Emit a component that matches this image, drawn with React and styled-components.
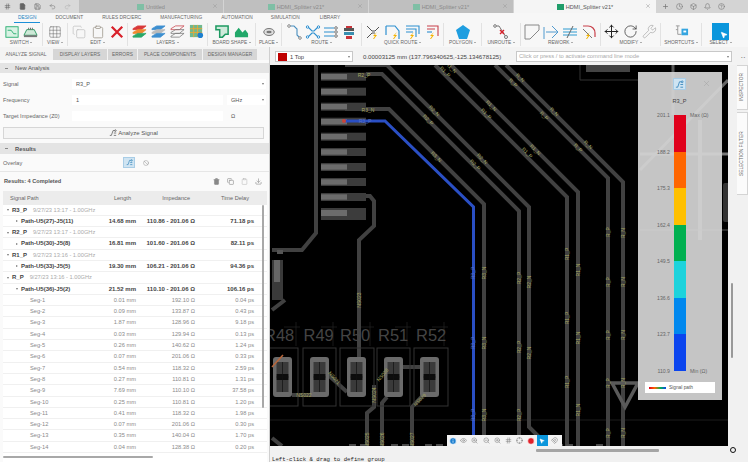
import React from "react";
import styled, { createGlobalStyle } from "styled-components";
import { Move, RotateCw, Wrench, Trash2, Download, Ban, X, Plus, Clock, Bell, HelpCircle, Grid3x3, Box, Save, Undo2, Redo2, File as FileIcon, Copy, Clipboard, Eye, ZoomIn, ZoomOut, Info, Hash, Crosshair, MousePointer2, Magnet } from "lucide-react";

const GlobalStyle = createGlobalStyle`
  html, body { margin: 0; padding: 0; background: #f1f1f1; }
  body { font-family: "Liberation Sans", Arial, sans-serif; color: #444; overflow: hidden; }
  * { box-sizing: border-box; }
`;

const Page = styled.div`
  width: 748px;
  height: 462px;
  display: flex;
  flex-direction: column;
  overflow: hidden;
`;

/* top window bar */
const TitleBar = styled.div`
  height: 13px;
  display: flex;
  background: #d4d4d4;
  flex: none;
`;
const AppTools = styled.div`
  width: 79px;
  display: flex;
  align-items: center;
  gap: 8px;
  padding-left: 4px;
  background: #d9d9d9;
  color: #666;
`;
const DocTab = styled.div`
  width: ${(p) => (p.$active ? 142 : 144)}px;
  margin-right: 1px;
  background: ${(p) => (p.$active ? "#f5f5f5" : "#bfbfbf")};
  color: ${(p) => (p.$active ? "#555" : "#8a8a8a")};
  display: flex;
  align-items: center;
  justify-content: center;
  gap: 2px;
  font-size: 5.6px;
  position: relative;
`;
const TabClose = styled.span`
  position: absolute;
  right: 5px;
  top: 3px;
  display: flex;
  color: #999;
`;
const DocSwatch = styled.span`
  width: 7px;
  height: 6px;
  background: ${(p) => (p.$active ? "#1f9d6a" : "#7fbfa5")};
`;
const WindowTools = styled.div`
  flex: 1;
  display: flex;
  align-items: center;
  gap: 7px;
  padding-left: 5px;
  color: #777;
`;

const RibbonTabs = styled.div`
  height: 9.5px;
  flex: none;
  display: flex;
  background: #f7f7f7;
  padding-left: 14px;
`;
const RibbonTab = styled.div`
  font-size: 4.8px;
  line-height: 9px;
  padding: 0 4px;
  margin-right: ${(p) => p.$gap}px;
  color: ${(p) => (p.$active ? "#1c7fbf" : "#666")};
  border-bottom: 1px solid ${(p) => (p.$active ? "#1c8fd8" : "transparent")};
  white-space: nowrap;
`;

const Ribbon = styled.div`
  height: 24.5px;
  flex: none;
  display: flex;
  background: #f7f7f7;
`;
const ToolGroup = styled.div`
  width: ${(p) => p.$w}px;
  flex: none;
  display: flex;
  flex-direction: column;
  align-items: center;
  border-right: ${(p) => (p.$last ? "none" : "1px solid #e2e2e2")};
  padding-right: ${(p) => (p.$last ? 9 : 0)}px;
  margin: 0.5px 0 1px;
`;
const ToolRow = styled.div`
  height: 18px;
  display: flex;
  align-items: center;
  gap: ${(p) => p.$gap ?? 3}px;
`;
const ToolLabel = styled.div`
  font-size: 4.8px;
  line-height: 6px;
  color: #666;
  white-space: nowrap;
  &::after {
    content: "";
    display: inline-block;
    margin-left: 1.5px;
    vertical-align: 1px;
    border-left: 1.3px solid transparent;
    border-right: 1.3px solid transparent;
    border-top: 1.6px solid #666;
  }
`;
const SelectTool = styled.div`
  width: 17px;
  height: 17px;
  background: #0a96dc;
  display: flex;
  align-items: flex-end;
  justify-content: flex-end;
  padding: 0 1px 1px 0;
  color: #fff;
`;

const Main = styled.div`
  flex: 1;
  display: flex;
  min-height: 0;
`;

/* left panel */
const LeftPanel = styled.div`
  width: 270px;
  flex: none;
  display: flex;
  flex-direction: column;
  background: #fafafa;
  border-right: 1px solid #cfcfcf;
  position: relative;
`;
const PanelTabs = styled.div`
  height: 13px;
  flex: none;
  display: flex;
  background: #f3f3f3;
  padding-top: 2px;
`;
const PanelTab = styled.div`
  width: ${(p) => p.$w}px;
  margin-right: 1px;
  background: ${(p) => (p.$active ? "#f3f3f3" : "#d6d6d6")};
  color: #666;
  font-size: 4.8px;
  line-height: 11px;
  letter-spacing: 0.05px;
  text-align: center;
  white-space: nowrap;
`;
const SectionHead = styled.div`
  height: ${(p) => p.$h}px;
  margin-top: ${(p) => p.$mt}px;
  flex: none;
  background: #e4e4e4;
  display: flex;
  align-items: center;
  font-size: 5.8px;
  font-weight: ${(p) => (p.$bold ? 700 : 400)};
  color: #555;
  padding-left: 5px;
  gap: 7px;
`;
const Dash = styled.span`
  width: 3px;
  height: 1px;
  background: #888;
`;
const FormArea = styled.div`
  flex: none;
  padding-top: 3px;
`;
const FormRow = styled.div`
  height: 16px;
  display: flex;
  align-items: center;
  padding-left: 3px;
  font-size: 5.6px;
  color: #666;
`;
const FieldLabel = styled.div`
  width: 69px;
  flex: none;
  white-space: nowrap;
`;
const Field = styled.div`
  width: ${(p) => p.$w}px;
  height: 10.5px;
  flex: none;
  background: ${(p) => (p.$plain ? "transparent" : "#fff")};
  padding: 0 4px;
  font-size: 5.6px;
  line-height: 10.5px;
  color: #555;
  position: relative;
  margin-right: 4px;
`;
const Caret = styled.span`
  position: absolute;
  right: 2px;
  top: 4px;
  width: 0;
  height: 0;
  border-left: 1.5px solid transparent;
  border-right: 1.5px solid transparent;
  border-top: 2px solid #777;
`;
const AnalyzeButton = styled.div`
  height: 11.5px;
  margin: 3px 5px 0 3px;
  border: 1px solid #d6d6d6;
  background: #f5f5f5;
  display: flex;
  align-items: center;
  justify-content: center;
  gap: 1px;
  font-size: 6px;
  color: #555;
  flex: none;
`;
const OverlayRow = styled.div`
  height: 18px;
  flex: none;
  display: flex;
  align-items: center;
  padding-left: 3px;
  font-size: 5.6px;
  color: #666;
  border-bottom: 1px solid #e6e6e6;
`;
const OverlayButtons = styled.div`
  margin-left: 101px;
  display: flex;
  align-items: center;
  gap: 8px;
  color: #999;
`;
const ToggleIcon = styled.span`
  width: 12px;
  height: 11px;
  background: #cfe4f2;
  border: 1px solid #a9cde6;
  display: flex;
  align-items: center;
  justify-content: center;
`;
const ResultsBar = styled.div`
  height: 18.5px;
  flex: none;
  display: flex;
  align-items: center;
  padding: 0 7px 0 4px;
  justify-content: space-between;
  font-size: 5.6px;
  font-weight: 700;
  color: #555;
`;
const ResultTools = styled.div`
  display: flex;
  gap: 7px;
  color: #888;
`;
const TableWrap = styled.div`
  flex: 1;
  margin: 0 2px 0 3px;
  position: relative;
  overflow: hidden;
  background: #fff;
`;
const Cols = "78px 57px 59px 59px";
const TableHead = styled.div`
  display: grid;
  grid-template-columns: ${Cols};
  height: 14px;
  align-items: center;
  background: #ececec;
  font-size: 5.6px;
  color: #666;
  text-align: right;
  & > div { padding-right: 7px; }
  & > div:first-child { text-align: left; padding-left: 7px; }
`;
const TableRow = styled.div`
  display: grid;
  grid-template-columns: ${Cols};
  height: 11.3px;
  align-items: center;
  font-size: ${(p) => (p.$bold ? 6 : 5.7)}px;
  line-height: 11px;
  font-weight: ${(p) => (p.$bold ? 700 : 400)};
  color: ${(p) => (p.$bold ? "#444" : "#8a8a8a")};
  border-bottom: 1px solid #f0f0f0;
  white-space: nowrap;
`;
const NameCell = styled.div`
  padding-left: ${(p) => p.$indent}px;
  grid-column: ${(p) => (p.$wide ? "1 / -1" : "auto")};
  display: flex;
  align-items: center;
  gap: 3px;
`;
const NumCell = styled.div`
  text-align: right;
  padding-right: 2px;
`;
const GroupDate = styled.span`
  font-weight: 400;
  font-size: 5.7px;
  color: #aaa;
  margin-left: 3px;
`;
const Arrow = styled.span`
  width: 0;
  height: 0;
  flex: none;
  ${(p) =>
    p.$open
      ? "border-left: 1.5px solid transparent; border-right: 1.5px solid transparent; border-top: 2px solid #777;"
      : "border-top: 1.5px solid transparent; border-bottom: 1.5px solid transparent; border-left: 2px solid #777;"}
`;
const VScroll = styled.div`
  position: absolute;
  left: 259px;
  top: 14px;
  width: 2px;
  height: 203px;
  background: #a8a8a8;
  border-radius: 1px;
`;
const HScroll = styled.div`
  position: absolute;
  left: 0;
  bottom: 4px;
  width: 150px;
  height: 2px;
  background: #a8a8a8;
  border-radius: 1px;
`;

/* right work area */
const WorkArea = styled.div`
  flex: 1;
  display: flex;
  flex-direction: column;
  min-width: 0;
`;
const LayerBar = styled.div`
  height: 18px;
  flex: none;
  display: flex;
  align-items: center;
  background: #f3f3f3;
  padding: 1px 0 0 5px;
  font-size: 5.8px;
  color: #444;
`;
const LayerSelect = styled.div`
  width: 78px;
  height: 11px;
  background: #fff;
  border: 1px solid #c8c8c8;
  display: flex;
  align-items: center;
  gap: 3px;
  padding-left: 2px;
  position: relative;
`;
const Swatch = styled.span`
  width: 9px;
  height: 8px;
  background: #bf0000;
`;
const Coords = styled.div`
  width: 163px;
  padding-left: 10px;
  font-size: 6.1px;
  white-space: nowrap;
`;
const CommandInput = styled.div`
  width: 216px;
  height: 11px;
  background: #fff;
  border: 1px solid #c8c8c8;
  color: #aaa;
  font-size: 5.8px;
  line-height: 9px;
  padding-left: 2px;
  position: relative;
`;
const MoreDots = styled.div`
  margin-left: 9px;
  font-size: 6px;
  font-weight: 700;
  color: #666;
  letter-spacing: 0.5px;
`;
const CanvasRow = styled.div`
  flex: 1;
  display: flex;
  min-height: 0;
`;
const Canvas = styled.div`
  width: 458px;
  height: 381px;
  background: #000;
  position: relative;
  overflow: hidden;
  flex: none;
`;
const SideStrip = styled.div`
  flex: 1;
  position: relative;
  background: #f1f1f1;
`;
const SideTab = styled.div`
  position: absolute;
  right: 0;
  top: ${(p) => p.$top}px;
  width: 11px;
  height: ${(p) => p.$h}px;
  background: #fbfbfb;
  border: 1px solid #d4d4d4;
  border-right: none;
  writing-mode: vertical-rl;
  transform: rotate(180deg);
  font-size: 4.8px;
  line-height: 9px;
  text-align: center;
  color: #666;
  white-space: nowrap;
`;
const SideScroll = styled.div`
  position: absolute;
  left: 3px;
  top: 218px;
  width: 2px;
  height: 75px;
  background: #999;
  border-radius: 1px;
`;
const StatusBar = styled.div`
  height: 16px;
  flex: none;
  position: relative;
  background: #f1f1f1;
  font-family: "Liberation Mono", monospace;
  font-size: 5.7px;
  color: #222;
  padding: 10.5px 0 0 2px;
  line-height: 6px;
  white-space: nowrap;
`;
const CanvasHScroll = styled.div`
  position: absolute;
  left: 266px;
  top: 3px;
  width: 123px;
  height: 2.5px;
  background: #a5a5a5;
  border-radius: 1px;
`;
const CornerDot = styled.div`
  position: absolute;
  left: 460px;
  top: 1px;
  width: 6px;
  height: 6px;
  border-radius: 50%;
  border: 1.5px solid #111;
`;

/* overlays on the canvas */
const Legend = styled.div`
  position: absolute;
  left: 368px;
  top: 7px;
  width: 84px;
  height: 328px;
  background: rgba(212, 212, 212, 0.93);
`;
const LegendClose = styled.span`
  position: absolute;
  left: 64px;
  top: 7px;
  display: flex;
  color: #9a9a9a;
`;
const LegendToggle = styled(ToggleIcon)`
  position: absolute;
  left: 35px;
  top: 6px;
  width: 13px;
  height: 12px;
`;
const LegendName = styled.div`
  position: absolute;
  left: 0;
  width: 83px;
  top: 25.5px;
  text-align: center;
  font-size: 5.6px;
  line-height: 7px;
  color: #444;
`;
const ScaleBar = styled.div`
  position: absolute;
  left: 36px;
  top: 43px;
  width: 12px;
  display: flex;
  flex-direction: column;
`;
const ScaleBand = styled.div`
  height: ${(p) => p.$h}px;
  background: ${(p) => p.$c};
`;
const ScaleLabels = styled.div`
  position: absolute;
  left: 0;
  top: 40px;
  width: 32px;
  height: 262px;
  display: flex;
  flex-direction: column;
  justify-content: space-between;
  text-align: right;
  font-size: 5.2px;
  line-height: 6px;
  color: #666;
`;
const ScaleEnd = styled.div`
  position: absolute;
  left: 52px;
  top: ${(p) => p.$top}px;
  font-size: 5.2px;
  line-height: 6px;
  color: #666;
  white-space: nowrap;
`;
const LegendKey = styled.div`
  position: absolute;
  left: 7px;
  top: 310px;
  width: 70px;
  height: 11px;
  background: #fff;
  display: flex;
  align-items: center;
  gap: 3px;
  padding-left: 4px;
  font-size: 4.8px;
  color: #555;
`;
const KeyLine = styled.span`
  width: 17px;
  height: 2px;
  background: linear-gradient(90deg, #e0001b, #ff6600, #00b050, #0a44ee);
`;
const CanvasToolbar = styled.div`
  position: absolute;
  left: 177px;
  top: 370px;
  height: 11px;
  display: flex;
  background: #f3f3f3;
  color: #888;
`;
const CanvasBtn = styled.span`
  width: ${(p) => p.$w ?? 11.2}px;
  height: 11px;
  display: flex;
  align-items: center;
  justify-content: center;
  background: ${(p) => (p.$on ? "#0a96dc" : "transparent")};
  color: ${(p) => p.$c ?? (p.$on ? "#fff" : "#888")};
`;
const HandleTab = styled.div`
  position: absolute;
  left: 453px;
  top: 118px;
  width: 5px;
  height: 39px;
  background: #333;
  border-radius: 2px 0 0 2px;
`;

const Sv = ({ children, s = 16 }) => (
  <svg width={s} height={s} viewBox="0 0 16 16" fill="none">
    {children}
  </svg>
);
const Bolt = () => <path d="M9 15l3-4H10l2-3-4 4h2l-2 3z" fill="#f5b400" />;
const Stack = ({ a, b, c, fill = true }) => (
  <>
    {[[a, 3], [b, 7], [c, 11]].map(([col, y]) => (
      <path key={y} d={`M1 ${y + 2}L6 ${y - 1}h9l-5 4H1z`} fill={fill ? col : "none"} stroke={col} strokeWidth="0.8" />
    ))}
  </>
);

const Icons = {
  switch2d: (
    <Sv s={14}>
      <rect x="1" y="2" width="14" height="12" fill="#d8f2e4" stroke="#1faa6a" />
      <path d="M3 6h4l3 4h3" stroke="#1faa6a" />
    </Sv>
  ),
  switch3d: (
    <Sv s={15}>
      <path d="M1 12L4 6h8l3 6z" fill="#cfe9d8" stroke="#2f9a63" />
      <rect x="1" y="12" width="14" height="2" fill="#777" />
      <path d="M6 6v-2M8 6v-2M10 6v-2" stroke="#666" />
    </Sv>
  ),
  grid: <Grid3x3 size={14} strokeWidth={0.8} color="#555" />,
  copy: <Copy size={14} strokeWidth={0.9} color="#aaa" />,
  paste: <Clipboard size={14} strokeWidth={1.4} color="#a09a90" />,
  del: (
    <Sv s={14}>
      <path d="M2 2l12 12M14 2L2 14" stroke="#d8202a" strokeWidth="2.6" />
    </Sv>
  ),
  layers1: <Sv s={15}><Stack a="#d8393a" b="#f08a30" c="#2aa868" /></Sv>,
  layers2: <Sv s={15}><Stack a="#3d8fd0" b="#bbb" c="#3d8fd0" /></Sv>,
  layers3: <Sv s={15}><Stack a="#c8404a" b="#777" c="#777" fill={false} /></Sv>,
  layers4: (
    <Sv s={15}>
      <rect x="1" y="1" width="13" height="13" fill="#6fb98f" />
      <path d="M1 5h13M1 9h13M5 1v13M9 1v13" stroke="#e8a838" />
      <circle cx="12" cy="12" r="3" fill="#1c7fd0" />
    </Sv>
  ),
  board1: (
    <Sv s={15}>
      <path d="M1 2h13v9h-3l-3 3H5v-8H1z" fill="#cfeadb" stroke="#1e9a62" strokeWidth="1.6" />
    </Sv>
  ),
  board2: (
    <Sv s={15}>
      <path d="M1 14V9l4-5 4 5 3-3 3 4v4z" fill="#22a86a" />
    </Sv>
  ),
  place: (
    <Sv s={14}>
      <ellipse cx="8" cy="8" rx="6" ry="4" fill="#ddd" stroke="#666" />
      <ellipse cx="8" cy="8" rx="3" ry="1.5" fill="#777" />
    </Sv>
  ),
  route1: (
    <Sv>
      <path d="M2 2h5l3 3v6l3 3" stroke="#4a8fc0" strokeWidth="1.1" />
      <circle cx="2" cy="2" r="1.3" stroke="#888" fill="#fff" />
      <circle cx="13" cy="14" r="1.3" stroke="#888" fill="#fff" />
    </Sv>
  ),
  route2: (
    <Sv>
      <path d="M3 3l4 4h2l4-4M3 13l4-4h2l4 4" stroke="#2d8fd0" strokeWidth="1.1" />
      <circle cx="2.5" cy="3" r="1.2" stroke="#2d8fd0" fill="#fff" />
      <circle cx="2.5" cy="13" r="1.2" stroke="#2d8fd0" fill="#fff" />
      <circle cx="13.5" cy="3" r="1.2" stroke="#2d8fd0" fill="#fff" />
      <circle cx="13.5" cy="13" r="1.2" stroke="#2d8fd0" fill="#fff" />
    </Sv>
  ),
  route3: (
    <Sv>
      <path d="M1 4h10M1 8h10M1 12h10" stroke="#2d8fd0" strokeWidth="1.2" />
      <circle cx="13" cy="4" r="1.3" stroke="#777" />
      <circle cx="13" cy="8" r="1.3" stroke="#777" />
      <circle cx="13" cy="12" r="1.3" stroke="#777" />
    </Sv>
  ),
  route4: (
    <Sv>
      <rect x="3" y="4" width="10" height="3" fill="#555" />
      <rect x="3" y="8" width="10" height="3" fill="#3a8fb0" />
      <path d="M5 2h6v2H5zM5 12h6v3H5z" fill="#c8343a" />
    </Sv>
  ),
  quick0: (
    <Sv>
      <path d="M2 2l5 5h3l4-4M2 14l5-5h3" stroke="#555" />
      <Bolt />
    </Sv>
  ),
  quick1: (
    <Sv>
      <path d="M1 2h9l4 5v8" stroke="#2d8fd0" strokeWidth="1.2" />
      <path d="M1 2v9" stroke="#2d8fd0" strokeWidth="1.2" />
      <Bolt />
    </Sv>
  ),
  quick2: (
    <Sv>
      <path d="M1 2h13v8M1 5h10v8M1 8h7" stroke="#2d8fd0" strokeWidth="1.1" />
      <path d="M6 15l3-4H7l2-3-4 4h2l-2 3z" fill="#f5b400" />
    </Sv>
  ),
  quick3: (
    <Sv>
      <path d="M2 2h11v10M2 5h8" stroke="#c8404a" strokeWidth="1.1" />
      <path d="M2 8h5" stroke="#2d8fd0" strokeWidth="1.1" />
      <path d="M6 15l3-4H7l2-3-4 4h2l-2 3z" fill="#f5b400" />
    </Sv>
  ),
  polygon: (
    <Sv>
      <path d="M8 1l7 5-3 9H4L1 6z" fill="#1f9ee0" />
    </Sv>
  ),
  unroute: (
    <Sv s={16}>
      <path d="M2 2h4l7 11" stroke="#777" />
      <circle cx="2" cy="2" r="1.3" stroke="#777" fill="#fff" />
      <circle cx="13" cy="13" r="1.5" stroke="#777" fill="#fff" />
      <path d="M7 6l4 4M11 6l-4 4" stroke="#d8202a" strokeWidth="1.4" />
    </Sv>
  ),
  rework1: (
    <Sv>
      <path d="M1 1h14v5l-9 9H1z" stroke="#888" />
    </Sv>
  ),
  rework2: (
    <Sv>
      <path d="M1 3v12M3 8h11M9 2l6 6-6 6" stroke="#3d8fc8" strokeWidth="0.9" />
    </Sv>
  ),
  rework3: (
    <Sv>
      <path d="M1 5h14M1 8h14M1 11h14" stroke="#2d9ad0" />
      <path d="M5 14l6-12" stroke="#666" />
    </Sv>
  ),
  rework4: (
    <Sv>
      <path d="M2 2h5c4 0 7 3 7 7v4" stroke="#c8404a" strokeWidth="1.2" />
      <path d="M2 5l9 9" stroke="#777" />
      <path d="M6 15l3-4H7l2-3-4 4h2l-2 3z" fill="#f5b400" />
    </Sv>
  ),
  move: <Move size={15} strokeWidth={1.6} color="#222" />,
  rotate: <RotateCw size={15} strokeWidth={1.2} color="#333" />,
  wrench: <Wrench size={15} strokeWidth={0.8} color="#888" />,
  shortcuts: (
    <Sv s={15}>
      <path d="M2 2h4M4 2v9h4M2 6h2" stroke="#999" />
      <rect x="8" y="5" width="7" height="7" fill="#35a5e0" />
      <rect x="10" y="7" width="3" height="2" fill="#fff" />
    </Sv>
  ),
};

const Signal = ({ s = 8, c = "#2d7fb8" }) => (
  <svg width={s} height={s} viewBox="0 0 10 10" fill="none" stroke={c} strokeWidth="0.9">
    <path d="M1 8h2l2-6h2M6 5h3M6 8h3" />
    <circle cx="8" cy="2" r="1" />
  </svg>
);

const toolGroups = [
  { label: "SWITCH", w: 43, gap: 4, icons: ["switch2d", "switch3d"] },
  { label: "VIEW", w: 25, icons: ["grid"] },
  { label: "EDIT", w: 60, gap: 5, icons: ["copy", "paste", "del"] },
  { label: "LAYERS", w: 80, gap: 4, icons: ["layers1", "layers2", "layers3", "layers4"] },
  { label: "BOARD SHAPE", w: 48, gap: 4, icons: ["board1", "board2"] },
  { label: "PLACE", w: 26, icons: ["place"] },
  { label: "ROUTE", w: 80, gap: 2, icons: ["route1", "route2", "route3", "route4"] },
  { label: "QUICK ROUTE", w: 82, gap: 4, icons: ["quick0", "quick1", "quick2", "quick3"] },
  { label: "POLYGON", w: 38, icons: ["polygon"] },
  { label: "UNROUTE", w: 39, icons: ["unroute"] },
  { label: "REWORK", w: 80, gap: 3, icons: ["rework1", "rework2", "rework3", "rework4"] },
  { label: "MODIFY", w: 60, gap: 4, icons: ["move", "rotate", "wrench"] },
  { label: "SHORTCUTS", w: 41, icons: ["shortcuts"] },
];

const ribbonTabs = [
  ["DESIGN", 11, true], ["DOCUMENT", 11], ["RULES DRC/ERC", 11], ["MANUFACTURING", 11],
  ["AUTOMATION", 10], ["SIMULATION", 12], ["LIBRARY", 0],
];

const groups = [
  { name: "R3_P", date: "9/27/23 13:17 - 1.00GHz", path: "Path-U5(27)-J5(11)", vals: ["14.68 mm", "110.86 - 201.06 Ω", "71.18 ps"] },
  { name: "R2_P", date: "9/27/23 13:17 - 1.00GHz", path: "Path-U5(30)-J5(8)", vals: ["16.81 mm", "101.60 - 201.06 Ω", "82.11 ps"] },
  { name: "R1_P", date: "9/27/23 13:16 - 1.00GHz", path: "Path-U5(33)-J5(5)", vals: ["19.30 mm", "106.21 - 201.06 Ω", "94.36 ps"] },
  { name: "R_P", date: "9/27/23 13:16 - 1.00GHz", path: "Path-U5(36)-J5(2)", vals: ["21.52 mm", "110.10 - 201.06 Ω", "106.16 ps"], open: true },
];
const segs = [
  ["0.01", "192.10", "0.04"], ["0.09", "133.87", "0.43"], ["1.87", "128.96", "9.18"], ["0.03", "129.94", "0.13"],
  ["0.26", "140.62", "1.24"], ["0.07", "201.06", "0.33"], ["0.54", "118.32", "2.59"], ["0.27", "110.81", "1.31"],
  ["7.69", "110.10", "37.58"], ["0.25", "110.81", "1.20"], ["0.41", "118.32", "1.98"], ["0.07", "201.06", "0.30"],
  ["0.35", "140.04", "1.70"], ["0.04", "128.38", "0.20"],
];

const bands = [
  ["#e0001b", 37], ["#ff6600", 36], ["#ffc000", 37], ["#00b050", 36],
  ["#1dd3dc", 37], ["#0088ee", 36], ["#0a44ee", 37],
];
const scale = ["201.1", "188.2", "175.3", "162.4", "149.5", "136.6", "123.7", "110.9"];

const TRACE = "#414141";
const traces = [
  "M345 109H389L484 204V446",
  "M366 74H382L519 211V446",
  "M345 65H387L529 207V427L545 443",
  "M435 65L567 197V446",
  "M451 65L578 192V446",
  "M495 65L608 178V446",
  "M506 65L623 182V446",
  "M366 196H370L374 201V226L359 240V357",
  "M316 65V233L302 250H272",
  "M374 385V407L367 413V446",
  "M387 397L382 403V446",
  "M425 393L412 407V446",
  "M325 372L347 392",
  "M292 395H315",
  "M402 367H422",
  "M272 438L282 446",
  "M272 310L285 300",
];
const pads = [76.7, 91.7, 106.7, 121.7, 136.7, 152, 167, 182, 197, 213];
const resistors = [273, 310, 347, 384, 420];
const boxes = [[262, 36], [303, 33], [340, 34], [377, 33], [414, 34]];
const refs = [["R48", 264], ["R49", 303.5], ["R50", 340], ["R51", 378], ["R52", 416]];
const crossMarks = [296, 333, 370, 407, 444];
const bottomPads = [349, 360, 391, 402, 425, 436, 556, 566, 596];
const diagLabels = [
  ["R2_N", 433, 112], ["R2_P", 427, 121], ["R3_N", 435, 158], ["R2_N", 481, 160], ["R2_P", 474, 166],
  ["R1_N", 490, 107], ["R1_P", 485, 115], ["R1_P", 444, 73], ["R1_N", 450, 69], ["R_N", 519, 79], ["R_P", 512, 84],
  ["R_N", 553, 113], ["R_P", 543, 117], ["R_N", 587, 146], ["R_P", 577, 149], ["R1_N", 534, 151], ["R1_P", 526, 154],
];
const vertLabels = [
  ["R2_P", 519, 278], ["R2_P", 519, 347], ["R2_P", 519, 415], ["R2_N", 529, 282], ["R2_N", 529, 353],
  ["R1_P", 567, 254], ["R1_P", 567, 318], ["R1_P", 567, 382], ["R1_N", 578, 270], ["R1_N", 578, 338], ["R1_N", 578, 410],
  ["R_P", 608, 232], ["R_P", 608, 282], ["R_P", 608, 335], ["R_P", 608, 383], ["R_P", 608, 433],
  ["R_N", 623, 233], ["R_N", 623, 282], ["R_N", 623, 335], ["R_N", 623, 383], ["R_N", 623, 433],
  ["R3_N", 484, 273], ["R3_N", 484, 343], ["R3_N", 484, 415], ["R3_P", 473, 273], ["R3_P", 473, 343], ["R3_P", 473, 415],
  ["NS023", 359, 300], ["NS024", 374, 395], ["NS025", 367, 440], ["NS026", 382, 440], ["NS027", 412, 440],
];

const BoardDrawing = () => (
  <svg width="458" height="381" viewBox="270 65 458 381" style={{ display: "block" }}>
    <rect x="270" y="65" width="458" height="381" fill="#000" />
    <path d="M270 420H728" stroke="#2a2a2a" strokeWidth="0.7" />
    <path d="M580 65V80H638" stroke="#333" fill="none" />
    <rect x="586" y="65" width="44" height="7" fill="#444" />
    <path d="M673 65V115" stroke="#555" strokeWidth="3" />
    <path d="M728 80L640 170" stroke="#666" strokeWidth="3" />
    <path d="M640 154H728" stroke="#777" strokeWidth="3" />
    <path d="M700 120V240" stroke="#777" strokeWidth="4" />
    <path d="M640 230H728" stroke="#555" strokeWidth="1" />
    {crossMarks.map((x) => (
      <path key={x} d={`M${x - 12} 327H${x + 4}M${x} 322V346`} stroke="#2a2a2a" strokeWidth="0.6" />
    ))}
    {traces.map((d) => (
      <path key={d} d={d} stroke={TRACE} strokeWidth="4" fill="none" />
    ))}
    {bottomPads.map((x) => (
      <rect key={x} x={x} y="444" width="7" height="2" fill="#4a4a4a" />
    ))}
    <rect x="272" y="260" width="11" height="40" fill="#3a3a3a" />
    <rect x="274" y="260" width="6" height="22" fill="#666" />
    <rect x="277" y="250" width="6" height="4" fill="#555" />
    {pads.map((y) => (
      <g key={y}>
        <rect x="321" y={y - 4} width="45" height="8" fill="#3c3c3c" />
        <rect x="321" y={y - 2.7} width="26" height="5.4" fill="#6c6c6c" />
      </g>
    ))}
    <rect x="321" y="208" width="45" height="12" fill="#3c3c3c" />
    <rect x="321" y="210" width="26" height="6" fill="#6c6c6c" />
    {boxes.map(([x, w]) => (
      <rect key={x} x={x} y="348" width={w} height="58" stroke="#333" fill="none" />
    ))}
    {resistors.map((x) => (
      <g key={x}>
        <rect x={x} y="357" width="19" height="40" rx="3" fill="#6a6a6a" />
        <rect x={x + 3.5} y="362" width="12" height="12" fill="#3a3a3a" />
        <rect x={x + 3.5} y="380" width="12" height="12" fill="#3a3a3a" />
        <rect x={x + 3.5} y="374" width="12" height="6" fill="#0c0c0c" />
        <path d={`M${x + 9.5} 362V392M${x + 3.5} 377H${x + 15.5}`} stroke="#111" strokeWidth="0.7" />
      </g>
    ))}
    {refs.map(([t, x]) => (
      <text key={t} x={x} y="341" fontFamily="Liberation Sans" fontSize="16.5" fill="#444">
        {t}
      </text>
    ))}
    <path d="M612 383H638L625 407Z" stroke="#5a5a5a" strokeWidth="3.5" fill="none" />
    <path d="M344 121H385L473.5 207V446" stroke="#2a4fc4" strokeWidth="3" fill="none" />
    <circle cx="344" cy="121" r="2" fill="#c8453a" />
    <path d="M272 367L283 355" stroke="#b8663a" strokeWidth="1.5" />
    {diagLabels.map(([t, x, y], i) => (
      <text key={i} x={x} y={y} fontFamily="Liberation Sans" fontSize="5" fill="#a8a860" textAnchor="middle" transform={`rotate(45 ${x} ${y})`}>
        {t}
      </text>
    ))}
    {vertLabels.map(([t, x, y], i) => (
      <text key={i} x={x + 1.8} y={y} fontFamily="Liberation Sans" fontSize="5" fill={x === 473 ? "#5a75c8" : "#a8a860"} textAnchor="middle" transform={`rotate(-90 ${x + 1.8} ${y})`}>
        {t}
      </text>
    ))}
    <text x="364" y="77" fontFamily="Liberation Sans" fontSize="5" fill="#a8a860" textAnchor="middle">R2_P</text>
    <text x="368" y="112" fontFamily="Liberation Sans" fontSize="5" fill="#a8a860" textAnchor="middle">R3_N</text>
    <text x="365" y="123" fontFamily="Liberation Sans" fontSize="5" fill="#5a75c8" textAnchor="middle">R3_P</text>
    <text x="304" y="397" fontFamily="Liberation Sans" fontSize="5" fill="#a8a860" textAnchor="middle">NS022</text>
    <g fill="#a8a860" fontFamily="Liberation Sans" fontSize="5" textAnchor="middle">
      <text x="333" y="379" transform="rotate(50 333 379)">NS021</text>
      <text x="384" y="376" transform="rotate(-50 384 376)">NS028</text>
      <text x="421" y="401" transform="rotate(-45 421 401)">NS029</text>
    </g>
  </svg>
);

export default function App() {
  return (
    <Page>
      <GlobalStyle />
      <TitleBar>
        <AppTools>
          <Hash size={7} strokeWidth={2} />
          <FileIcon size={7} strokeWidth={2} fill="#666" />
          <Save size={7} strokeWidth={2} />
          <Undo2 size={7} strokeWidth={1.5} />
          <Redo2 size={7} strokeWidth={1.5} color="#aaa" />
        </AppTools>
        <DocTab><DocSwatch />Untitled<TabClose><X size={6} /></TabClose></DocTab>
        <DocTab><DocSwatch />HDMI_Splitter v21*<TabClose><X size={6} /></TabClose></DocTab>
        <DocTab><DocSwatch />HDMI_Splitter v21*<TabClose><X size={6} /></TabClose></DocTab>
        <DocTab $active><DocSwatch $active />HDMI_Splitter v21*<TabClose><X size={6} /></TabClose></DocTab>
        <WindowTools>
          <Plus size={7} strokeWidth={2.5} />
          <Clock size={7} strokeWidth={2} />
          <Box size={7} strokeWidth={2} />
          <Bell size={7} strokeWidth={2} />
          <HelpCircle size={7} strokeWidth={2} />
        </WindowTools>
      </TitleBar>

      <RibbonTabs>
        {ribbonTabs.map(([t, gap, active]) => (
          <RibbonTab key={t} $gap={gap} $active={active}>{t}</RibbonTab>
        ))}
      </RibbonTabs>

      <Ribbon>
        {toolGroups.map((g) => (
          <ToolGroup key={g.label} $w={g.w}>
            <ToolRow $gap={g.gap}>
              {g.icons.map((name) => (
                <React.Fragment key={name}>{Icons[name]}</React.Fragment>
              ))}
            </ToolRow>
            <ToolLabel>{g.label}</ToolLabel>
          </ToolGroup>
        ))}
        <ToolGroup $w={46} $last>
          <ToolRow>
            <SelectTool><MousePointer2 size={8} fill="#fff" /></SelectTool>
          </ToolRow>
          <ToolLabel>SELECT</ToolLabel>
        </ToolGroup>
      </Ribbon>

      <Main>
        <LeftPanel>
          <PanelTabs>
            <PanelTab $w={52} $active>ANALYZE SIGNAL</PanelTab>
            <PanelTab $w={54}>DISPLAY LAYERS</PanelTab>
            <PanelTab $w={29}>ERRORS</PanelTab>
            <PanelTab $w={64}>PLACE COMPONENTS</PanelTab>
            <PanelTab $w={54}>DESIGN MANAGER</PanelTab>
          </PanelTabs>
          <SectionHead $h={10} $mt={3}><Dash />New Analysis</SectionHead>
          <FormArea>
            <FormRow>
              <FieldLabel>Signal</FieldLabel>
              <Field $w={194}>R3_P<Caret /></Field>
            </FormRow>
            <FormRow>
              <FieldLabel>Frequency</FieldLabel>
              <Field $w={151}>1</Field>
              <Field $w={39}>GHz<Caret /></Field>
            </FormRow>
            <FormRow>
              <FieldLabel>Target Impedance (Z0)</FieldLabel>
              <Field $w={151} />
              <Field $w={39} $plain>Ω</Field>
            </FormRow>
          </FormArea>
          <AnalyzeButton><Signal c="#555" />Analyze Signal</AnalyzeButton>
          <SectionHead $h={11} $mt={4.5} $bold><Dash />Results</SectionHead>
          <OverlayRow>
            Overlay
            <OverlayButtons>
              <ToggleIcon><Signal s={7} /></ToggleIcon>
              <Ban size={6} />
            </OverlayButtons>
          </OverlayRow>
          <ResultsBar>
            Results: 4 Completed
            <ResultTools>
              <Trash2 size={7} fill="#888" />
              <Copy size={7} />
              <Clipboard size={7} color="#bbb" />
              <Download size={7} />
            </ResultTools>
          </ResultsBar>
          <TableWrap>
            <TableHead>
              <div>Signal Path</div>
              <div>Length</div>
              <div>Impedance</div>
              <div>Time Delay</div>
            </TableHead>
            {groups.map((g) => (
              <React.Fragment key={g.name}>
                <TableRow $bold>
                  <NameCell $indent={4} $wide>
                    <Arrow $open />{g.name}<GroupDate>{g.date}</GroupDate>
                  </NameCell>
                </TableRow>
                <TableRow $bold>
                  <NameCell $indent={13}><Arrow $open={g.open} />{g.path}</NameCell>
                  {g.vals.map((v) => <NumCell key={v}>{v}</NumCell>)}
                </TableRow>
              </React.Fragment>
            ))}
            {segs.map(([len, imp, delay], i) => (
              <TableRow key={i}>
                <NameCell $indent={27}>Seg-{i + 1}</NameCell>
                <NumCell>{len} mm</NumCell>
                <NumCell>{imp} Ω</NumCell>
                <NumCell>{delay} ps</NumCell>
              </TableRow>
            ))}
            <VScroll />
            <HScroll />
          </TableWrap>
        </LeftPanel>

        <WorkArea>
          <LayerBar>
            <LayerSelect><Swatch />1 Top<Caret /></LayerSelect>
            <Coords>0.00003125 mm (137.796340625,-125.134678125)</Coords>
            <CommandInput>Click or press / to activate command line mode<Caret /></CommandInput>
            <MoreDots>··</MoreDots>
          </LayerBar>
          <CanvasRow>
            <Canvas>
              <BoardDrawing />
              <HandleTab />
              <Legend>
                <LegendToggle><Signal s={9} /></LegendToggle>
                <LegendClose><X size={9} strokeWidth={1} /></LegendClose>
                <LegendName>R3_P</LegendName>
                <ScaleLabels>{scale.map((s) => <div key={s}>{s}</div>)}</ScaleLabels>
                <ScaleBar>{bands.map(([c, h]) => <ScaleBand key={c} $c={c} $h={h} />)}</ScaleBar>
                <ScaleEnd $top={40}>Max (Ω)</ScaleEnd>
                <ScaleEnd $top={296}>Min (Ω)</ScaleEnd>
                <LegendKey><KeyLine />Signal path</LegendKey>
              </Legend>
              <CanvasToolbar>
                <CanvasBtn $c="#1c7fd0"><Info size={8} fill="#1c7fd0" stroke="#fff" /></CanvasBtn>
                <CanvasBtn><Eye size={7} /></CanvasBtn>
                <CanvasBtn><ZoomIn size={7} /></CanvasBtn>
                <CanvasBtn><ZoomOut size={7} /></CanvasBtn>
                <CanvasBtn><ZoomIn size={7} /></CanvasBtn>
                <CanvasBtn><Hash size={7} /></CanvasBtn>
                <CanvasBtn><Crosshair size={7} /></CanvasBtn>
                <CanvasBtn $c="#e0202a"><Ban size={8} fill="#e0202a" stroke="#fff" /></CanvasBtn>
                <CanvasBtn $on><MousePointer2 size={6} fill="#fff" /></CanvasBtn>
                <CanvasBtn $w={14}><Magnet size={7} /></CanvasBtn>
              </CanvasToolbar>
            </Canvas>
            <SideStrip>
              <SideTab $top={0} $h={45}>INSPECTOR</SideTab>
              <SideTab $top={47} $h={83}>SELECTION FILTER</SideTab>
              <SideScroll />
            </SideStrip>
          </CanvasRow>
          <StatusBar>
            Left-click &amp; drag to define group
            <CanvasHScroll />
            <CornerDot />
          </StatusBar>
        </WorkArea>
      </Main>
    </Page>
  );
}
